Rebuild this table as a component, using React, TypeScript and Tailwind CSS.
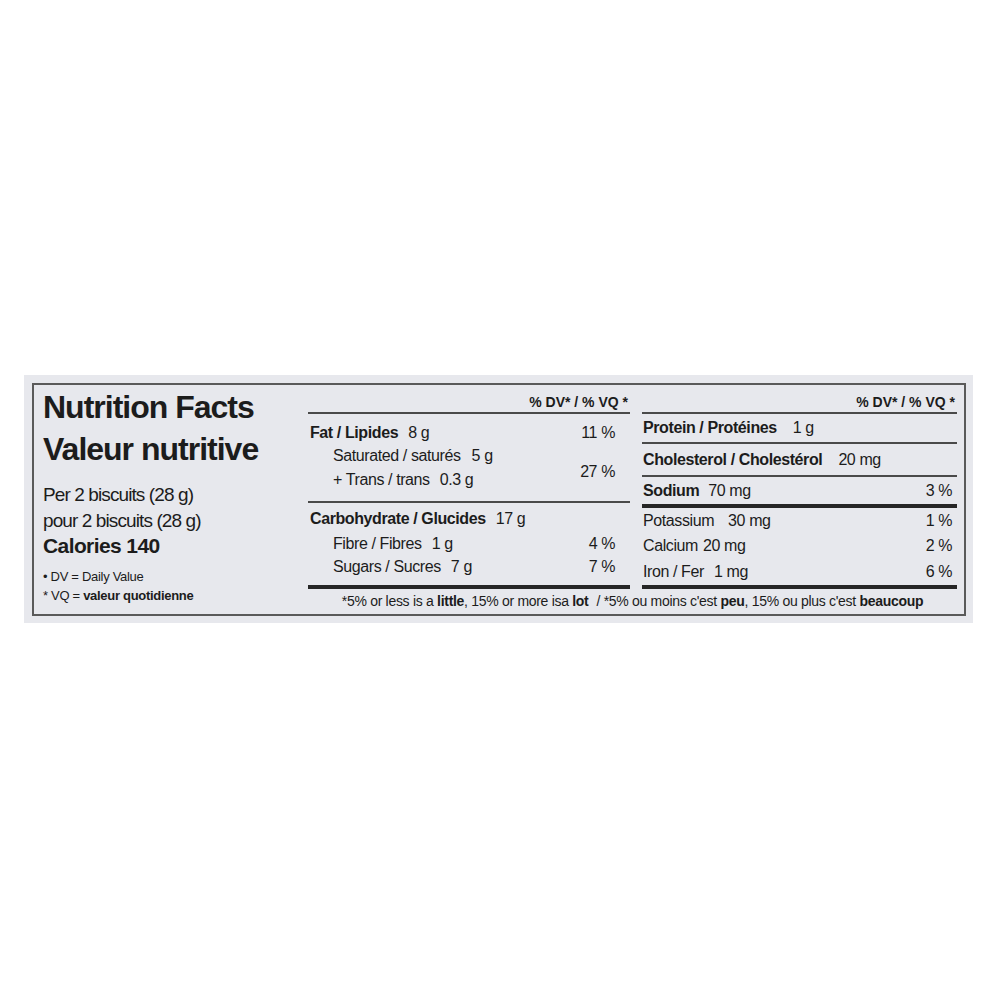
import React from "react";

const Thin = () => <div className="h-[2px] bg-[#4a4a4a]" />;
const Thick = () => <div className="h-[4px] bg-[#262626]" />;

export default function App() {
  return (
    <div className="w-[1000px] h-[1000px] bg-white pt-[375px] pl-[24px] font-['Liberation_Sans',Arial,sans-serif] text-[#1c1c1c]">
      <div className="w-[949px] h-[248px] bg-[#e7e8ed] pl-[8px] pt-[8px]">
        <div className="w-[934px] h-[233px] border-2 border-[#5a5a5a] flex">
          {/* Left column */}
          <div className="w-[274px] pl-[9px] pt-[1px] flex flex-col">
            <div className="text-[32px] leading-[42px] font-bold tracking-[-1px]">Nutrition Facts</div>
            <div className="text-[32px] leading-[42px] font-bold tracking-[-1px]">Valeur nutritive</div>
            <div className="mt-[12px] text-[19px] leading-[26px] tracking-[-0.9px]">Per 2 biscuits (28 g)</div>
            <div className="text-[19px] leading-[26px] tracking-[-0.9px]">pour 2 biscuits (28 g)</div>
            <div className="text-[21px] leading-[24px] font-bold tracking-[-0.6px]">Calories 140</div>
            <div className="mt-[9px] text-[13px] leading-[19px] tracking-[-0.3px]">• DV = Daily Value</div>
            <div className="text-[13px] leading-[19px] tracking-[-0.3px]">* VQ = <span className="font-semibold">valeur quotidienne</span></div>
          </div>

          {/* Right area */}
          <div className="w-[656px] flex flex-col">
            <div className="flex text-[16px] tracking-[-0.4px]">
              {/* Middle column */}
              <div className="w-[322px] flex flex-col">
                <div className="h-[27px] pt-[9px] text-right pr-[2px] text-[14px] leading-[16px] font-bold tracking-[0px]">% DV* / % VQ *</div>
                <Thin />
                <div className="mt-[7px] h-[24px] leading-[24px] flex justify-between pl-[2px] pr-[15px]">
                  <div><span className="font-bold">Fat / Lipides</span><span className="ml-[10px]">8 g</span></div>
                  <div>11 %</div>
                </div>
                <div className="h-[48px] flex justify-between pl-[25px] pr-[15px]">
                  <div className="flex flex-col">
                    <div className="h-[22px] leading-[22px]">Saturated / saturés<span className="ml-[11px]">5 g</span></div>
                    <div className="h-[26px] leading-[26px]">+ Trans / trans<span className="ml-[10px]">0.3 g</span></div>
                  </div>
                  <div className="mt-[15px] leading-[24px] h-[24px]">27 %</div>
                </div>
                <div className="mt-[8px]"><Thin /></div>
                <div className="mt-[3px] h-[25px] leading-[25px] pl-[2px]">
                  <span className="font-bold">Carbohydrate / Glucides</span><span className="ml-[10px]">17 g</span>
                </div>
                <div className="h-[26px] leading-[26px] flex justify-between pl-[25px] pr-[15px]">
                  <div>Fibre / Fibres<span className="ml-[10px]">1 g</span></div>
                  <div>4 %</div>
                </div>
                <div className="h-[20px] leading-[20px] flex justify-between pl-[25px] pr-[15px]">
                  <div>Sugars / Sucres<span className="ml-[10px]">7 g</span></div>
                  <div>7 %</div>
                </div>
                <div className="mt-[8px]"><Thick /></div>
              </div>

              <div className="w-[12px]" />

              {/* Right column */}
              <div className="w-[315px] flex flex-col">
                <div className="h-[27px] pt-[9px] text-right pr-[2px] text-[14px] leading-[16px] font-bold tracking-[0px]">% DV* / % VQ *</div>
                <Thin />
                <div className="h-[28px] leading-[28px] pl-[1px]">
                  <span className="font-bold">Protein / Protéines</span><span className="ml-[16px]">1 g</span>
                </div>
                <Thin />
                <div className="h-[31px] leading-[31px] pl-[1px]">
                  <span className="font-bold">Cholesterol / Cholestérol</span><span className="ml-[16px]">20 mg</span>
                </div>
                <Thin />
                <div className="h-[27px] leading-[27px] flex justify-between pl-[1px] pr-[5px]">
                  <div><span className="font-bold">Sodium</span><span className="ml-[9px]">70 mg</span></div>
                  <div>3 %</div>
                </div>
                <Thick />
                <div className="h-[26px] leading-[26px] flex justify-between pl-[1px] pr-[5px]">
                  <div>Potassium<span className="ml-[14px]">30 mg</span></div>
                  <div>1 %</div>
                </div>
                <div className="h-[24px] leading-[24px] flex justify-between pl-[1px] pr-[5px]">
                  <div>Calcium<span className="ml-[5px]">20 mg</span></div>
                  <div>2 %</div>
                </div>
                <div className="h-[27px] leading-[27px] flex justify-between pl-[1px] pr-[5px]">
                  <div>Iron / Fer<span className="ml-[10px]">1 mg</span></div>
                  <div>6 %</div>
                </div>
                <Thick />
              </div>
            </div>

            {/* Footnote */}
            <div className="h-[25px] leading-[25px] text-center text-[14px] tracking-[-0.3px] pr-[7px]">
              *5% or less is a <span className="font-bold">little</span>, 15% or more isa <span className="font-bold">lot</span>
              <span className="ml-[8px]">/ *5% ou moins c'est <span className="font-bold">peu</span>, 15% ou plus c'est <span className="font-bold">beaucoup</span></span>
            </div>
          </div>
        </div>
      </div>
    </div>
  );
}
